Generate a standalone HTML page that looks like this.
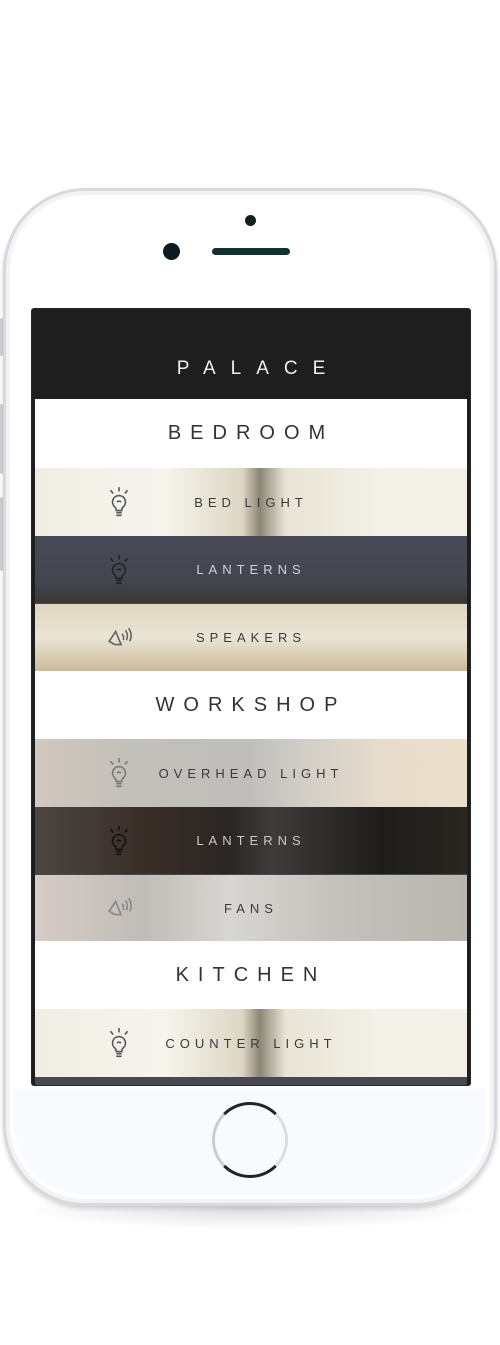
<!DOCTYPE html>
<html><head><meta charset="utf-8"><style>
*{margin:0;padding:0;box-sizing:border-box}
body{width:500px;height:1345px;background:#fff;position:relative;overflow:hidden;font-family:"Liberation Sans",sans-serif}
.shadow{position:absolute;left:20px;top:1190px;width:460px;height:40px;border-radius:50%;background:radial-gradient(ellipse at center,rgba(0,0,0,.12),rgba(0,0,0,0) 70%)}
.phone{position:absolute;left:3px;top:188px;width:494px;height:1018px;border-radius:82px;background:#fff;border:3px solid #d9d8de;box-shadow:inset 0 0 0 4px #f3f3f6,0 3px 4px rgba(0,0,0,.15)}
.phone .bot{position:absolute;left:8px;right:8px;top:898px;bottom:8px;background:#f7fbfd;border-radius:0 0 72px 72px}
.btn{position:absolute;left:0;width:3px;background:#cfcfd4;border-radius:2px}
.screen{position:absolute;left:31px;top:308px;width:440px;height:778px;background:#1e1e1e;border-radius:3px;overflow:hidden;border:1px solid #23282a}
.in{position:absolute;left:3px;right:3px;top:90px;bottom:0;background:#474852}
.row{position:absolute;left:0;right:0;display:flex;align-items:center;justify-content:center;letter-spacing:5px;font-size:13px;color:#3a3a3a}
.white{background:#fff;font-size:20px;letter-spacing:9px;color:#333}
.ic{position:absolute;left:71px;top:50%;transform:translateY(-50%)}
</style></head><body>
<div class="shadow"></div>
<div class="btn" style="top:318px;height:38px"></div>
<div class="btn" style="top:404px;height:70px"></div>
<div class="btn" style="top:497px;height:74px"></div>
<div class="phone"><div class="bot"></div></div>
<div style="position:absolute;left:245px;top:215px;width:11px;height:11px;border-radius:50%;background:#0e2020"></div>
<div style="position:absolute;left:163px;top:243px;width:17px;height:17px;border-radius:50%;background:#0e1a20"></div>
<div style="position:absolute;left:212px;top:248px;width:78px;height:7px;border-radius:4px;background:#123030"></div>
<div style="position:absolute;left:212px;top:1102px;width:76px;height:76px;border-radius:50%;border:3px solid #222;border-right-color:#ddd;border-left-color:#ccc"></div>
<div class="screen">
<div class="row" style="top:0;height:90px;background:#1e1e1e;color:#eee;font-size:19px;letter-spacing:15px;padding-left:15px;padding-top:30px">PALACE</div>
<div class="in">
<div class="row white" style="top:0;height:69px">BEDROOM</div>
<div class="row" style="top:69px;height:68px;background:linear-gradient(90deg,#efede4,#f6f4ec 30%,#ddd6c4 48%,#8c8676 52%,#e9e4d6 58%,#f3f1e8 80%,#f3f1e7)">BED LIGHT
<svg class="ic" width="26" height="32" viewBox="0 0 24 30" fill="none" stroke="#555" stroke-width="1.5"><path d="M12 1v4M4 4l2.5 3M20 4l-2.5 3M12 9a6 6 0 0 0-4 10.5c1 1 1.5 2 1.5 3.5h5c0-1.5.5-2.5 1.5-3.5A6 6 0 0 0 12 9z"/><path d="M10 15q2-1.5 4 0M9.5 25h5M9.5 27.5h5"/></svg></div>
<div class="row" style="top:137px;height:67px;background:linear-gradient(180deg,#474a56,#43454e 70%,#3a3733);color:#d0d2da">LANTERNS
<svg class="ic" width="26" height="32" viewBox="0 0 24 30" fill="none" stroke="#222" stroke-width="1.5"><path d="M12 1v4M4 4l2.5 3M20 4l-2.5 3M12 9a6 6 0 0 0-4 10.5c1 1 1.5 2 1.5 3.5h5c0-1.5.5-2.5 1.5-3.5A6 6 0 0 0 12 9z"/><path d="M10 15q2-1.5 4 0M9.5 25h5M9.5 27.5h5"/></svg></div>
<div class="row" style="top:205px;height:67px;background:linear-gradient(180deg,#e0d4bd,#eae4d6 50%,#ccbb9a)">SPEAKERS
<svg class="ic" width="26" height="24" viewBox="0 0 24 22" fill="none" stroke="#666" stroke-width="1.5" style="left:72px"><path d="M2 14l6-9 5 12-6 0z"/><path d="M14 7q2 3 1 6M17 4q3 4 1 9M20 2q4 6 1 12"/></svg></div>
<div class="row white" style="top:272px;height:68px">WORKSHOP</div>
<div class="row" style="top:340px;height:68px;background:linear-gradient(90deg,#d2c8bf,#c3c0ba 20%,#bfbebb 50%,#cfccc6 60%,#e6dccb 80%,#ecdfcc)">OVERHEAD LIGHT
<svg class="ic" width="26" height="32" viewBox="0 0 24 30" fill="none" stroke="#777" stroke-width="1.5"><path d="M12 1v4M4 4l2.5 3M20 4l-2.5 3M12 9a6 6 0 0 0-4 10.5c1 1 1.5 2 1.5 3.5h5c0-1.5.5-2.5 1.5-3.5A6 6 0 0 0 12 9z"/><path d="M10 15q2-1.5 4 0M9.5 25h5M9.5 27.5h5"/></svg></div>
<div class="row" style="top:408px;height:67px;background:linear-gradient(90deg,#4a4642,#3a2e28 25%,#2a2624 45%,#3e3c3a 55%,#1e1d1b 80%,#2a2620);color:#c8c8c8">LANTERNS
<svg class="ic" width="26" height="32" viewBox="0 0 24 30" fill="none" stroke="#111" stroke-width="1.5"><path d="M12 1v4M4 4l2.5 3M20 4l-2.5 3M12 9a6 6 0 0 0-4 10.5c1 1 1.5 2 1.5 3.5h5c0-1.5.5-2.5 1.5-3.5A6 6 0 0 0 12 9z"/><path d="M10 15q2-1.5 4 0M9.5 25h5M9.5 27.5h5"/></svg></div>
<div class="row" style="top:476px;height:66px;background:linear-gradient(90deg,#d6ccc6,#c0bcb8 25%,#d8d6d2 45%,#c4c1bc 70%,#bab6b0)">FANS
<svg class="ic" width="26" height="24" viewBox="0 0 24 22" fill="none" stroke="#888" stroke-width="1.5" style="left:72px"><path d="M2 14l6-9 5 12-6 0z"/><path d="M14 7q2 3 1 6M17 4q3 4 1 9M20 2q4 6 1 12"/></svg></div>
<div class="row white" style="top:542px;height:68px">KITCHEN</div>
<div class="row" style="top:610px;height:68px;background:linear-gradient(90deg,#efede4,#f6f4ec 30%,#ddd6c4 48%,#8c8676 52%,#e9e4d6 58%,#f3f1e8 80%,#f3f1e7)">COUNTER LIGHT
<svg class="ic" width="26" height="32" viewBox="0 0 24 30" fill="none" stroke="#555" stroke-width="1.5"><path d="M12 1v4M4 4l2.5 3M20 4l-2.5 3M12 9a6 6 0 0 0-4 10.5c1 1 1.5 2 1.5 3.5h5c0-1.5.5-2.5 1.5-3.5A6 6 0 0 0 12 9z"/><path d="M10 15q2-1.5 4 0M9.5 25h5M9.5 27.5h5"/></svg></div>
</div></div>
</body></html>
